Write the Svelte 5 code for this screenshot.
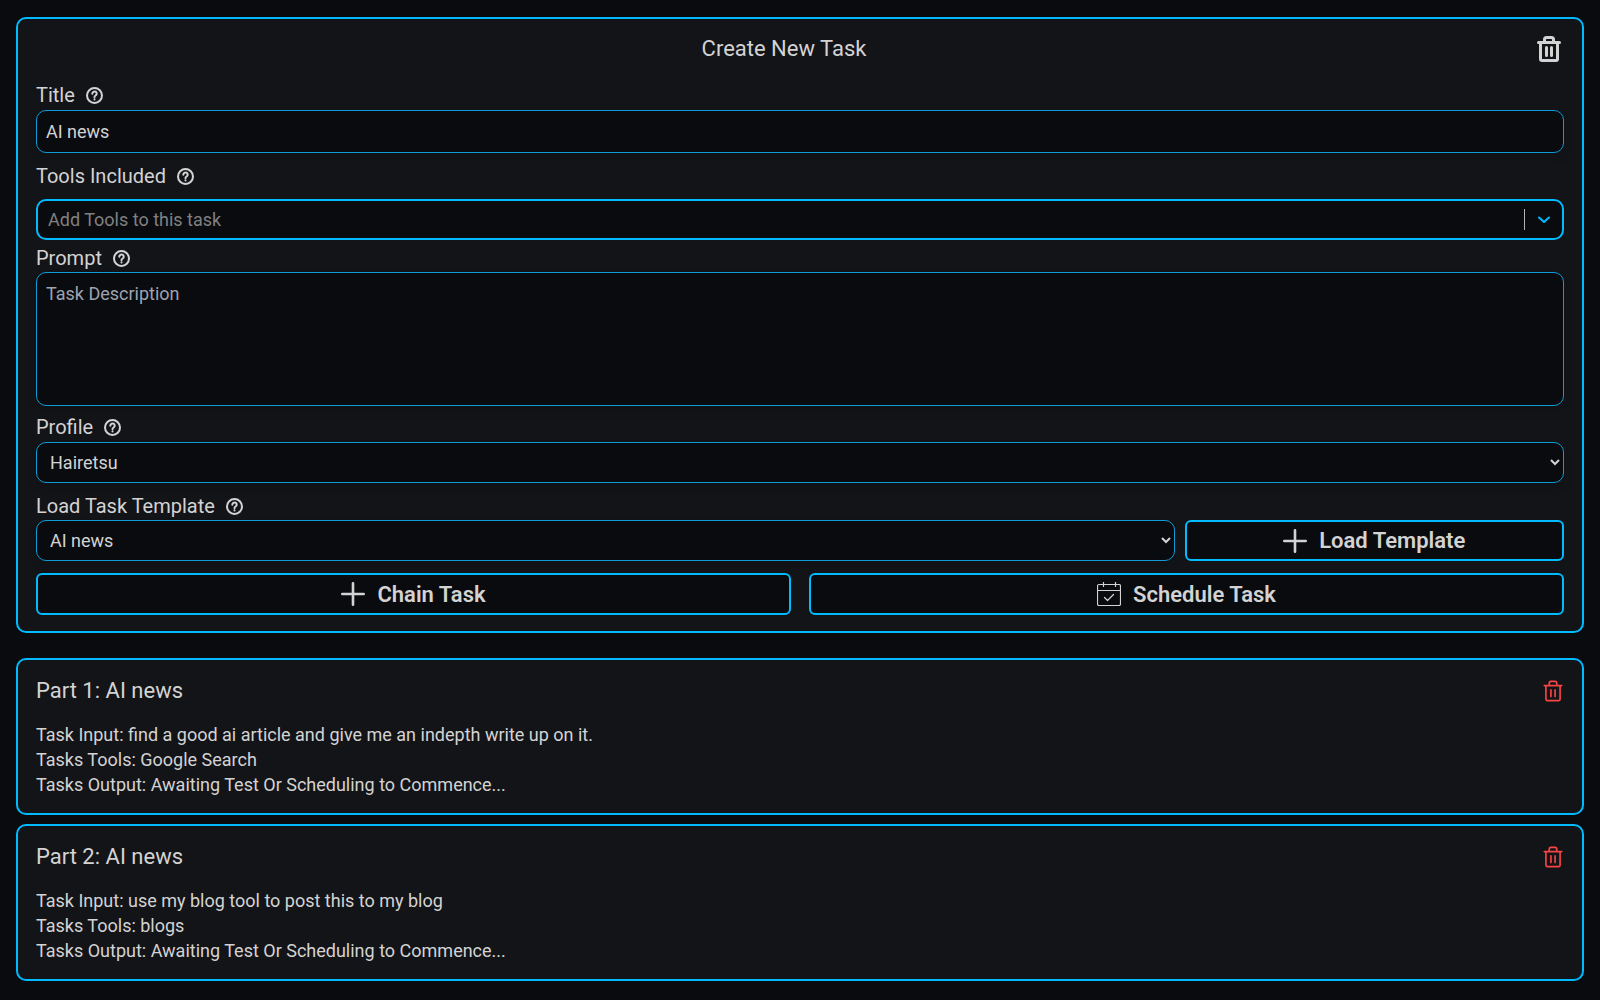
<script>
  let title = $state('AI news');
  let tools = $state('');
  let prompt = $state('');
  let profile = $state('Hairetsu');
  let template = $state('AI news');

  const parts = [
    {
      name: 'Part 1: AI news',
      input: 'find a good ai article and give me an indepth write up on it.',
      tools: 'Google Search',
    },
    {
      name: 'Part 2: AI news',
      input: 'use my blog tool to post this to my blog',
      tools: 'blogs',
    },
  ];
</script>

{#snippet help()}
  <svg class="help" viewBox="0 0 17 17" aria-hidden="true">
    <circle cx="8.5" cy="8.5" r="7.5" />
    <path d="M6.3 6.7a2.2 2.2 0 1 1 3.4 1.8c-.8.5-1.2.8-1.2 1.4v.3" />
    <path d="M8.5 12.2v.3" />
  </svg>
{/snippet}

{#snippet trash(weight)}
  <svg class={['trash', weight]} viewBox="0 0 24 26" aria-hidden="true">
    <path d="M1.5 6.5h21M3.5 6.5V23a1.5 1.5 0 0 0 1.5 1.5h14a1.5 1.5 0 0 0 1.5-1.5V6.5M7.5 6V3.5a2 2 0 0 1 2-2h5a2 2 0 0 1 2 2V6M9.5 11.5v8M14.5 11.5v8" />
  </svg>
{/snippet}

{#snippet plus()}
  <svg class="glyph" viewBox="0 0 24 24" stroke-width="2.6" aria-hidden="true">
    <path d="M12 1.300v21.400M1.300 12h21.400" />
  </svg>
{/snippet}

<main>
  <form class="card task" onsubmit={(e) => e.preventDefault()}>
    <header>
      <h1>Create New Task</h1>
      <button type="button" class="icon" aria-label="Clear task">{@render trash('bold')}</button>
    </header>

    <label class="caption" for="title">Title {@render help()}</label>
    <input id="title" class="field" type="text" bind:value={title} />

    <label class="caption spaced tools-caption" for="tools">Tools Included {@render help()}</label>
    <div class="combo">
      <input id="tools" type="text" placeholder="Add Tools to this task" bind:value={tools} />
      <button type="button" class="open" aria-label="Show tools">
        <svg viewBox="0 0 12 8" aria-hidden="true"><path d="M1 1.500l5 4.500 5-4.500" /></svg>
      </button>
    </div>

    <label class="caption prompt-caption" for="prompt">Prompt {@render help()}</label>
    <textarea id="prompt" class="field" placeholder="Task Description" bind:value={prompt}></textarea>

    <label class="caption profile-caption" for="profile">Profile {@render help()}</label>
    <select id="profile" class="field" bind:value={profile}>
      <option>Hairetsu</option>
    </select>

    <label class="caption spaced" for="template">Load Task Template {@render help()}</label>
    <div class="template-row">
      <select id="template" class="field" bind:value={template}>
        <option>AI news</option>
      </select>
      <button type="button" class="action">{@render plus()} Load Template</button>
    </div>

    <div class="actions">
      <button type="button" class="action">{@render plus()} Chain Task</button>
      <button type="submit" class="action">
        <svg class="glyph" viewBox="0 0 24 24" stroke-width="1.2" aria-hidden="true">
          <path d="M2 2.500h20a1.500 1.500 0 0 1 1.500 1.500v18a1.500 1.500 0 0 1-1.500 1.500H2A1.500 1.500 0 0 1 .5 22V4A1.500 1.500 0 0 1 2 2.500zM.5 8.500h23M6.500 .5v4M18.500 .5v4M7.500 15.500l3 3 6-6" />
        </svg>
        Schedule Task
      </button>
    </div>
  </form>

  <section class="parts" aria-label="Task parts">
    {#each parts as part}
      <article class="card part">
        <div class="part-head">
          <h2>{part.name}</h2>
          <button type="button" class="icon danger" aria-label="Delete {part.name}">{@render trash('thin')}</button>
        </div>
        <p>Task Input: {part.input}</p>
        <p>Tasks Tools: {part.tools}</p>
        <p>Tasks Output: Awaiting Test Or Scheduling to Commence...</p>
      </article>
    {/each}
  </section>
</main>

<style>
  :global(body) {
    margin: 0;
    background: #0a0b0f;
  }

  main {
    --line: #00bbff;
    --ink: #d3d3d3;
    --well: #0a0b0f;
    box-sizing: border-box;
    min-height: 100vh;
    padding: 17px 16px 19px;
    color: var(--ink);
    font-family: Roboto, 'Liberation Sans', sans-serif;
    font-size: 18px;
    line-height: 25px;
  }

  main :global(*) {
    box-sizing: border-box;
  }

  .card {
    border: 2px solid var(--line);
    border-radius: 10px;
    background: #131418;
  }

  .task {
    display: flex;
    flex-direction: column;
    padding: 12px 18px 16px;
  }

  header {
    display: flex;
    align-items: center;
    height: 35px;
    margin-bottom: 15px;
  }

  h1,
  h2 {
    margin: 0;
    font-size: 22px;
    font-weight: 400;
    line-height: 28px;
  }

  h1 {
    flex: 1;
    text-align: center;
  }

  button,
  input,
  select,
  textarea {
    margin: 0;
    color: inherit;
    font: inherit;
  }

  .icon {
    display: flex;
    justify-content: flex-end;
    min-width: 32px;
    padding: 0;
    border: 0;
    background: none;
  }

  svg {
    flex: none;
    fill: none;
    stroke: currentColor;
    stroke-linecap: round;
    stroke-linejoin: round;
  }

  .trash.bold {
    width: 24px;
    height: 26px;
    margin-right: 3px;
    stroke-width: 3;
  }

  .trash.thin {
    width: 20px;
    height: 22px;
    margin-right: 1px;
    stroke-width: 2;
  }

  .danger {
    color: #f84444;
  }

  .caption {
    display: flex;
    align-items: center;
    gap: 11px;
    height: 28px;
    font-size: 20px;
    line-height: 28px;
  }

  .caption + input.field {
    margin-top: 1px;
  }

  .spaced {
    margin-top: 9px;
  }

  .tools-caption {
    margin-bottom: 9px;
  }

  .prompt-caption {
    margin-top: 4px;
  }

  .profile-caption {
    margin-top: 7px;
    margin-bottom: 1px;
  }

  .help {
    width: 17px;
    height: 17px;
    stroke-width: 2;
  }

  .field {
    width: 100%;
    height: 41px;
    padding: 0 9px;
    border: 1px solid #0e9bd8;
    border-radius: 10px;
    outline: none;
    background: var(--well);
    box-shadow: 0 6px 8px rgb(0 0 0 / 12%);
  }

  input.field {
    height: 43px;
  }

  textarea.field {
    display: block;
    height: 134px;
    padding: 8px 9px;
    resize: none;
  }

  .field::placeholder {
    color: #9ca3af;
    opacity: 1;
  }

  .combo {
    display: flex;
    align-items: center;
    height: 41px;
    border: 2px solid var(--line);
    border-radius: 10px;
    background: var(--well);
  }

  .combo input {
    flex: 1;
    min-width: 0;
    padding: 0 10px;
    border: 0;
    outline: none;
    background: none;
  }

  .combo input::placeholder {
    color: #808080;
    opacity: 1;
  }

  .open {
    display: flex;
    align-items: center;
    justify-content: center;
    width: 38px;
    height: 21px;
    padding: 0;
    border: 0;
    border-left: 1px solid #b3b3b3;
    background: none;
    color: var(--line);
  }

  .open svg {
    width: 12px;
    height: 8px;
    stroke-width: 2;
  }

  .template-row {
    display: grid;
    grid-template-columns: 3fr 1fr;
    gap: 10px;
  }

  .actions {
    display: grid;
    grid-template-columns: 1fr 1fr;
    gap: 18px;
    margin-top: 12px;
  }

  .action {
    display: flex;
    align-items: center;
    justify-content: center;
    gap: 12px;
    height: 41px;
    padding: 0 12px;
    border: 2px solid var(--line);
    border-radius: 6px;
    background: var(--well);
    font-size: 22px;
    font-weight: 600;
  }

  .actions .action {
    height: 42px;
  }

  .glyph {
    width: 24px;
    height: 24px;
  }

  .parts {
    display: grid;
    gap: 9px;
    margin-top: 25px;
  }

  .part {
    padding: 16px 18px;
  }

  .part-head {
    display: flex;
    align-items: center;
    justify-content: space-between;
    height: 30px;
    margin-bottom: 16px;
  }

  p {
    margin: 0;
  }
</style>
